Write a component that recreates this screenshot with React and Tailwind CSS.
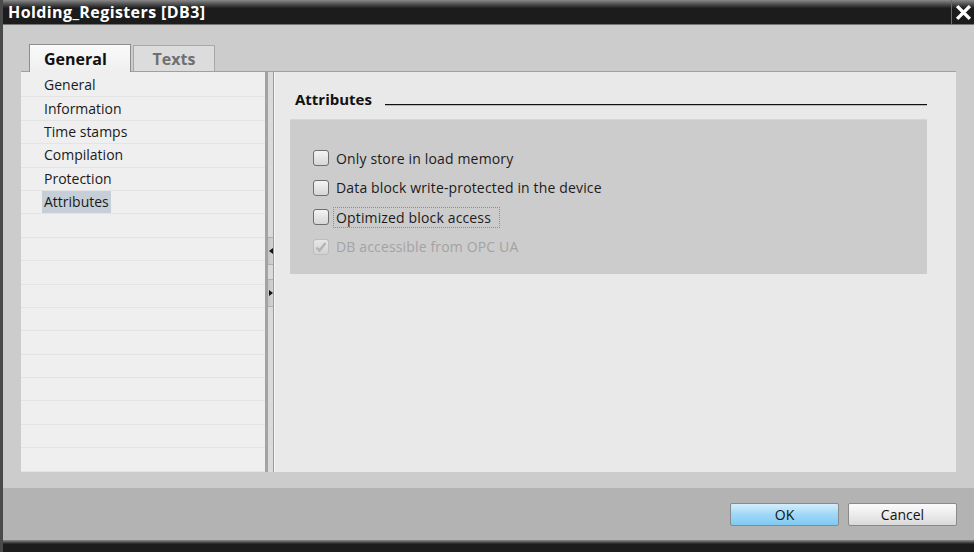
import React from "react";

const font = { fontFamily: '"Open Sans", "DejaVu Sans", sans-serif' };

const navItems = ["General", "Information", "Time stamps", "Compilation", "Protection", "Attributes"];

const attributes = [
  { label: "Only store in load memory" },
  { label: "Data block write-protected in the device" },
  { label: "Optimized block access", focused: true },
  { label: "DB accessible from OPC UA", checked: true, disabled: true },
];

const Checkbox = ({ checked, disabled }) => (
  <span
    className={
      "w-[16px] h-[16px] rounded-[3px] border flex items-center justify-center shrink-0 " +
      (disabled
        ? "border-[#bdbdbd] bg-gradient-to-b from-[#e6e6e6] to-[#d2d2d2]"
        : "border-[#6e6e6e] bg-gradient-to-b from-[#f4f4f4] to-[#d6d6d6]")
    }
  >
    {checked && (
      <svg width="12" height="12" viewBox="0 0 12 12">
        <path d="M1.5 6.5 L4.5 9.5 L10.5 2" fill="none" stroke="#b3b3b3" strokeWidth="2.4" />
      </svg>
    )}
  </span>
);

export default function App() {
  const rows = Array.from({ length: 17 }, (_, i) => navItems[i] || "");

  return (
    <div style={font} className="w-[974px] h-[552px] flex flex-col bg-[#cccccc] border-l-[3px] border-[#4a4a4a] overflow-hidden">
      {/* Title bar */}
      <div className="h-[25px] shrink-0 flex bg-gradient-to-b from-[#8a8a8a] via-[#1c1c1c] via-[35%] to-[#1c1c1c] border-b border-[#777]">
        <div className="flex-1 pl-[5px] text-white font-bold text-[16px] leading-[24px] tracking-[0.4px]">
          Holding_Registers [DB3]
        </div>
        <div className="w-[23px] border-l border-[#6a6a6a] flex items-center justify-center">
          <svg width="17" height="17" viewBox="0 0 16 16">
            <path d="M2 2 L14 14 M14 2 L2 14" stroke="#ffffff" strokeWidth="3.2" />
          </svg>
        </div>
      </div>

      {/* Body */}
      <div className="flex-1 flex flex-col pt-[19px] pl-[18px] pr-[18px] pb-[16px]">
        {/* Tabs */}
        <div className="h-[28px] flex items-end pl-[8px] gap-[2px] border-b border-[#a0a0a0]">
          <div className="w-[102px] h-[28px] -mb-px border border-b-0 border-[#8e8e8e] bg-gradient-to-b from-[#fafafa] to-[#efefef] flex items-center pl-[14px] text-[16px] font-bold text-[#111]">
            General
          </div>
          <div className="w-[82px] h-[26px] border border-b-0 border-[#a8a8a8] bg-[#dcdcdc] flex items-center justify-center text-[16px] font-bold text-[#707070]">
            Texts
          </div>
        </div>

        {/* Content */}
        <div className="flex-1 flex">
          {/* Nav list */}
          <div className="w-[244px] bg-[#efefef] pt-[2px]">
            {rows.map((item, i) => (
              <div key={i} className="h-[23.4px] border-b border-[#e4e4e4] pl-[21px] flex items-center">
                {item && (
                  <span
                    className={
                      "px-[2px] text-[14px] leading-[22px] text-[#1a1a1a] " +
                      (item === "Attributes" ? "bg-[#c6ced7]" : "")
                    }
                  >
                    {item}
                  </span>
                )}
              </div>
            ))}
          </div>

          {/* Splitter */}
          <div className="w-[10px] flex">
            <div className="w-[3px] bg-[#a3a3a3]" />
            <div className="w-[5px] bg-[#dadada] flex flex-col pt-[165px]">
              <div className="h-[28px] bg-gradient-to-r from-[#c4c4c4] to-[#d4d4d4] border-y border-[#b0b0b0] flex items-center justify-center">
                <svg width="4" height="6" viewBox="0 0 4 6"><path d="M4 0 L0 3 L4 6 Z" fill="#111" /></svg>
              </div>
              <div className="h-[14px]" />
              <div className="h-[28px] bg-gradient-to-r from-[#c4c4c4] to-[#d4d4d4] border-y border-[#b0b0b0] flex items-center justify-center">
                <svg width="4" height="6" viewBox="0 0 4 6"><path d="M0 0 L4 3 L0 6 Z" fill="#111" /></svg>
              </div>
            </div>
            <div className="w-px bg-[#9a9a9a]" />
            <div className="w-px bg-[#f6f6f6]" />
          </div>

          {/* Right panel */}
          <div className="flex-1 bg-[#e9e9e9] pt-[17px] pl-[15px] pr-[29px]">
            <div className="flex items-end pl-[5px] h-[20px]">
              <span className="text-[15px] font-bold text-[#111] leading-[20px]">Attributes</span>
              <div className="flex-1 ml-[13px] mb-[3px] h-[2px] border-t border-[#111] border-b border-b-[#b8b8b8]" />
            </div>
            <div className="mt-[10px] h-[155px] bg-[#cccccc] border-t border-[#d6d6d6] pt-[30px] pl-[23px] flex flex-col gap-[13.5px]">
              {attributes.map((a) => (
                <div key={a.label} className="flex items-center gap-[4px] h-[16px]">
                  <Checkbox checked={a.checked} disabled={a.disabled} />
                  <span
                    className={
                      "text-[14px] leading-[19px] pl-[2px] tracking-[0.15px] border border-dotted " +
                      (a.focused ? "border-[#7f8fb0] pr-[8px]" : "border-transparent pr-[2px]") +
                      (a.disabled ? " text-[#a3a3a3]" : " text-[#1e1a1a]")
                    }
                  >
                    {a.label}
                  </span>
                </div>
              ))}
            </div>
          </div>
        </div>
      </div>

      {/* Footer */}
      <div className="h-[52px] shrink-0 bg-[#b3b3b3] flex items-start justify-end gap-[9px] pt-[15px] pr-[17px]">
        <button className="w-[109px] h-[23px] border border-[#8a8a8a] rounded-[2px] bg-gradient-to-b from-[#d4eefc] via-[#9fd8f6] to-[#7fcaf2] text-[14px] text-[#111] leading-[21px]">
          OK
        </button>
        <button className="w-[109px] h-[23px] border border-[#8a8a8a] rounded-[2px] bg-gradient-to-b from-[#fbfbfb] via-[#ececec] to-[#d9d9d9] text-[14px] text-[#111] leading-[21px]">
          Cancel
        </button>
      </div>
      <div className="h-[12px] shrink-0 bg-gradient-to-b from-[#8c8c8c] via-[#1c1c1c] via-[35%] to-[#1c1c1c]" />
    </div>
  );
}
